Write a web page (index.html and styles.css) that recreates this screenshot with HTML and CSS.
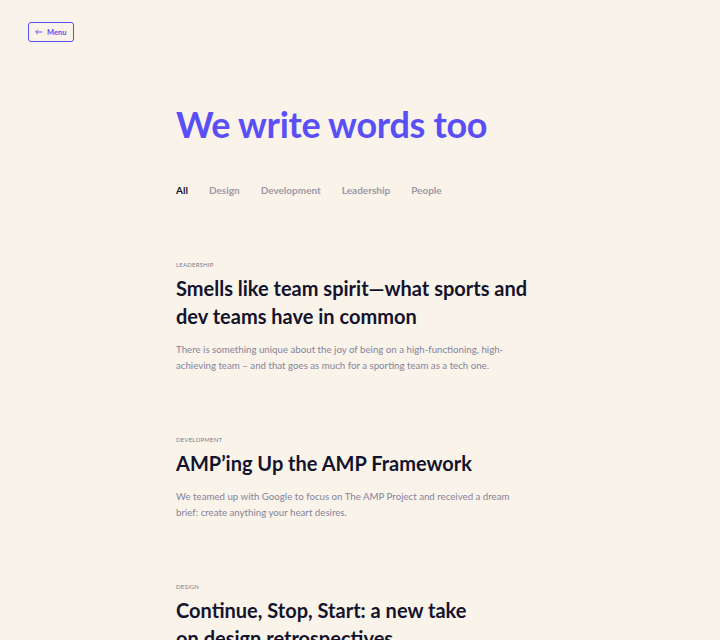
FILE: index.html
```html
<!DOCTYPE html>
<html lang="en">

<head>
    <meta charset="UTF-8">
    <meta name="viewport" content="width=device-width, initial-scale=1.0">
    <title>Blog</title>
    <link rel="stylesheet" href="styles.css">
</head>

<body>
    <header class="top-bar">
        <a class="menu-button" href="#">
            <svg width="8" height="6" viewBox="0 0 8 6" fill="none" stroke="currentColor" stroke-width="0.9">
                <path d="M7.5 3H0.8M3 0.7L0.7 3L3 5.3" />
            </svg>
            Menu
        </a>
    </header>
    <main class="content">
        <h1 class="page-title">We write words too</h1>
        <nav class="filters">
            <a href="#" class="filter active">All</a>
            <a href="#" class="filter">Design</a>
            <a href="#" class="filter">Development</a>
            <a href="#" class="filter">Leadership</a>
            <a href="#" class="filter">People</a>
        </nav>
        <section class="posts">
            <article class="post">
                <div class="post-category">Leadership</div>
                <h2 class="post-title">Smells like team spirit—what sports and dev teams have in common</h2>
                <p class="post-summary">There is something unique about the joy of being on a high-functioning, high-achieving team – and that goes as much for a sporting team as a tech one.</p>
            </article>
            <article class="post">
                <div class="post-category">Development</div>
                <h2 class="post-title">AMP’ing Up the AMP Framework</h2>
                <p class="post-summary">We teamed up with Google to focus on The AMP Project and received a dream brief: create anything your heart desires.</p>
            </article>
            <article class="post">
                <div class="post-category">Design</div>
                <h2 class="post-title">Continue, Stop, Start: a new take<br>on design retrospectives</h2>
                <p class="post-summary">What went well, what didn’t, and what we should try next time.</p>
            </article>
        </section>
    </main>
</body>

</html>
```

FILE: styles.css
```css
body {
    font-family: Lato, "Noto Sans", sans-serif;
    background-color: #f9f3ea;
    color: #14132d;
    margin: 0;
    padding: 0;
}

.top-bar {
    display: flex;
    padding: 22px 28px 0;
}

.menu-button {
    display: flex;
    align-items: center;
    gap: 4px;
    box-sizing: border-box;
    height: 20px;
    padding: 0 7px 0 6px;
    border: 1px solid #5a4ff5;
    border-radius: 3px;
    color: #5a4ff5;
    font-size: 7.5px;
    font-weight: 700;
    text-decoration: none;
}

.content {
    width: 368px;
    margin: 0 auto;
    padding-top: 60px;
}

.page-title {
    margin: 0;
    color: #5a4ff5;
    font-size: 36px;
    font-weight: 700;
    line-height: 44px;
    letter-spacing: -0.3px;
}

.filters {
    display: flex;
    gap: 21px;
    margin-top: 38px;
}

.filter {
    font-size: 10px;
    font-weight: 700;
    color: #9c99a8;
    text-decoration: none;
}

.filter.active {
    color: #14132d;
}

.posts {
    margin-top: 65px;
}

.post {
    margin-bottom: 63px;
}

.post-category {
    font-size: 6px;
    text-transform: uppercase;
    letter-spacing: 0.2px;
    color: #7d7a8c;
}

.post-title {
    margin: 6px 0 0;
    font-size: 20px;
    font-weight: 700;
    line-height: 28px;
}

.post-summary {
    max-width: 346px;
    margin: 11px 0 0;
    font-size: 9.7px;
    line-height: 16px;
    color: #86839a;
}
```
